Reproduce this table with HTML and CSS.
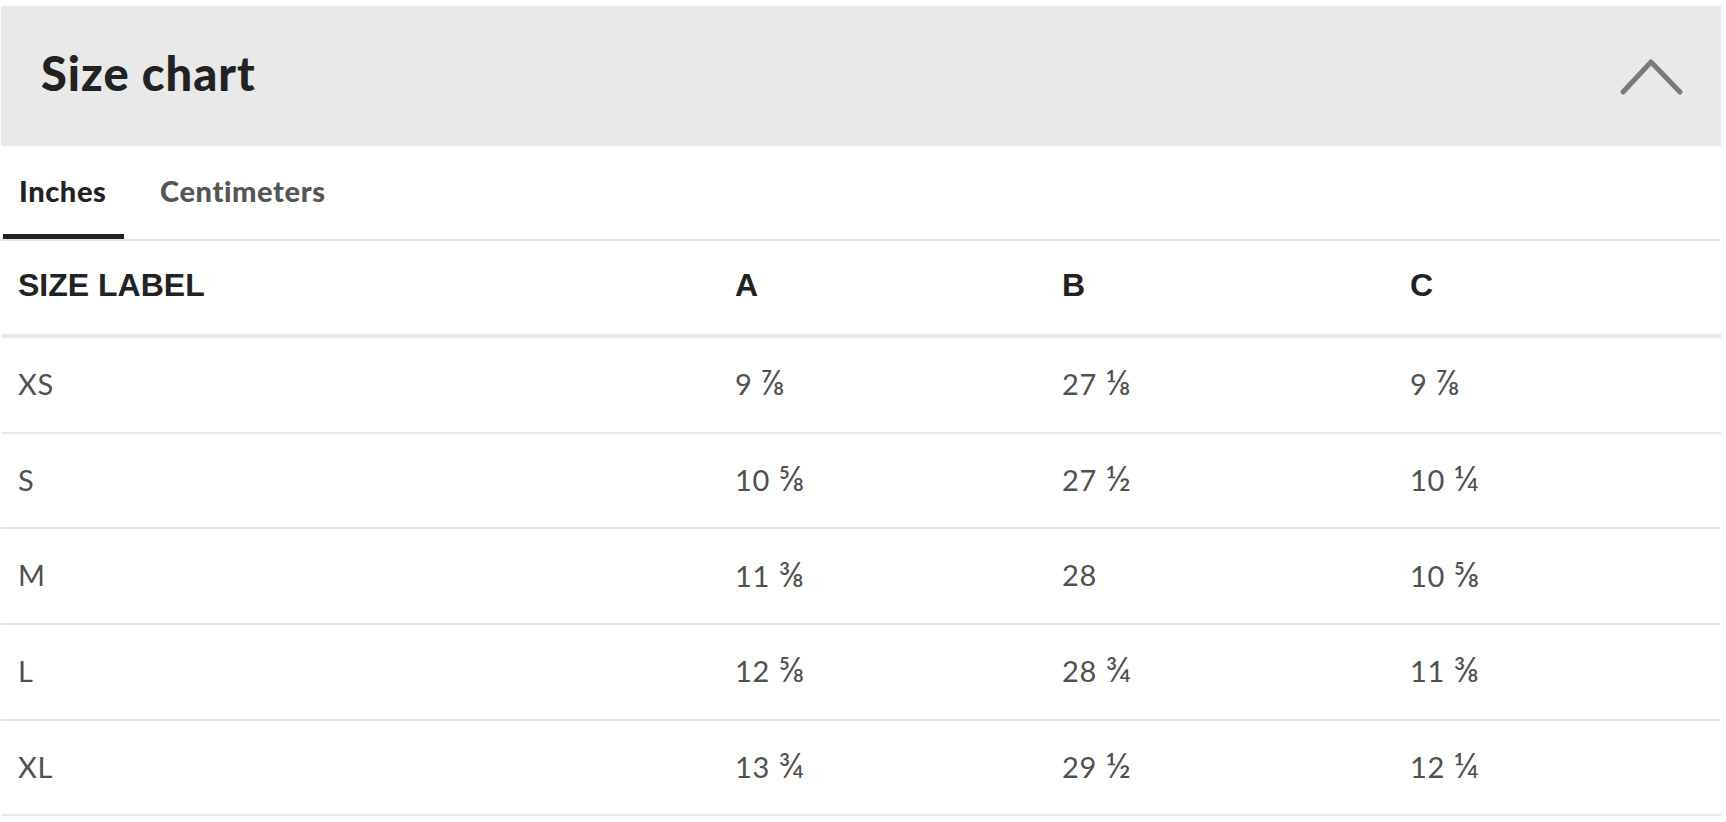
FILE: index.html
```html
<!DOCTYPE html>
<html lang="en">
<head>
<meta charset="utf-8">
<title>Size chart</title>
<link rel="stylesheet" href="styles.css">
</head>
<body>
<section class="panel">
  <header class="panel-head">
    <h2 class="panel-title">Size chart</h2>
    <svg class="chevron" width="66" height="42" viewBox="0 0 66 42" aria-hidden="true">
      <polyline points="4,36 32,6 61,36" fill="none" stroke="#7a7a7a" stroke-width="5" stroke-linecap="round" stroke-linejoin="round"/>
    </svg>
  </header>
  <nav class="tabs">
    <span class="tab tab-active">Inches</span>
    <span class="tab">Centimeters</span>
  </nav>
  <div class="chart">
    <div class="row row-head">
      <div class="cell">SIZE LABEL</div><div class="cell">A</div><div class="cell">B</div><div class="cell">C</div>
    </div>
    <div class="row">
      <div class="cell">XS</div><div class="cell">9 <span class="frac">⅞</span></div><div class="cell">27 <span class="frac">⅛</span></div><div class="cell">9 <span class="frac">⅞</span></div>
    </div>
    <div class="row">
      <div class="cell">S</div><div class="cell">10 <span class="frac">⅝</span></div><div class="cell">27 <span class="frac">½</span></div><div class="cell">10 <span class="frac">¼</span></div>
    </div>
    <div class="row">
      <div class="cell">M</div><div class="cell">11 <span class="frac">⅜</span></div><div class="cell">28</div><div class="cell">10 <span class="frac">⅝</span></div>
    </div>
    <div class="row">
      <div class="cell">L</div><div class="cell">12 <span class="frac">⅝</span></div><div class="cell">28 <span class="frac">¾</span></div><div class="cell">11 <span class="frac">⅜</span></div>
    </div>
    <div class="row">
      <div class="cell">XL</div><div class="cell">13 <span class="frac">¾</span></div><div class="cell">29 <span class="frac">½</span></div><div class="cell">12 <span class="frac">¼</span></div>
    </div>
  </div>
</section>
</body>
</html>
```

FILE: styles.css
```css
html, body {
  margin: 0;
  padding: 0;
  background: #ffffff;
}

body {
  font-family: Lato, "Open Sans", "DejaVu Sans", sans-serif;
}

.panel {
  width: 1720px;
  margin: 6px 0 0 1px;
}

.panel-head {
  height: 140px;
  background: #e9e9e9;
  display: flex;
  align-items: center;
  justify-content: space-between;
  padding: 0 36px 0 40px;
  box-sizing: border-box;
}

.panel-title {
  margin: 0 0 6px 0;
  font-family: Lato, sans-serif;
  font-weight: 900;
  font-size: 47px;
  color: #222222;
  letter-spacing: 1px;
}

.chevron {
  display: block;
  margin-top: 2px;
}

.tabs {
  display: flex;
  height: 93px;
  padding-left: 2px;
  border-bottom: 2px solid #e5e5e5;
}

.tab {
  display: flex;
  align-items: flex-start;
  padding: 27px 16px 0;
  font-family: Lato, sans-serif;
  font-weight: 900;
  font-size: 29px;
  letter-spacing: 0.6px;
  color: #555555;
  box-sizing: border-box;
}

.tab + .tab {
  padding-left: 36px;
}

.tab-active {
  color: #222222;
  border-bottom: 5px solid #222222;
  width: 121px;
}

.row {
  display: grid;
  grid-template-columns: 717px 327px 348px 1fr;
  height: 93.7px;
  align-items: center;
  border-bottom: 2px solid #e5e5e5;
}

.row-head {
  height: 93px;
  border-bottom: 4px solid #e5e5e5;
}

.cell {
  padding: 0 0 3px 17px;
  font-size: 29px;
  letter-spacing: 0.8px;
  color: #505050;
}

.frac {
  font-size: 1.2em;
  line-height: 1;
  letter-spacing: 0;
}

.row-head .cell {
  padding-bottom: 4px;
  font-family: "Liberation Sans", Arial, sans-serif;
  font-weight: 700;
  font-size: 32px;
  letter-spacing: 0;
  color: #222222;
}
```
